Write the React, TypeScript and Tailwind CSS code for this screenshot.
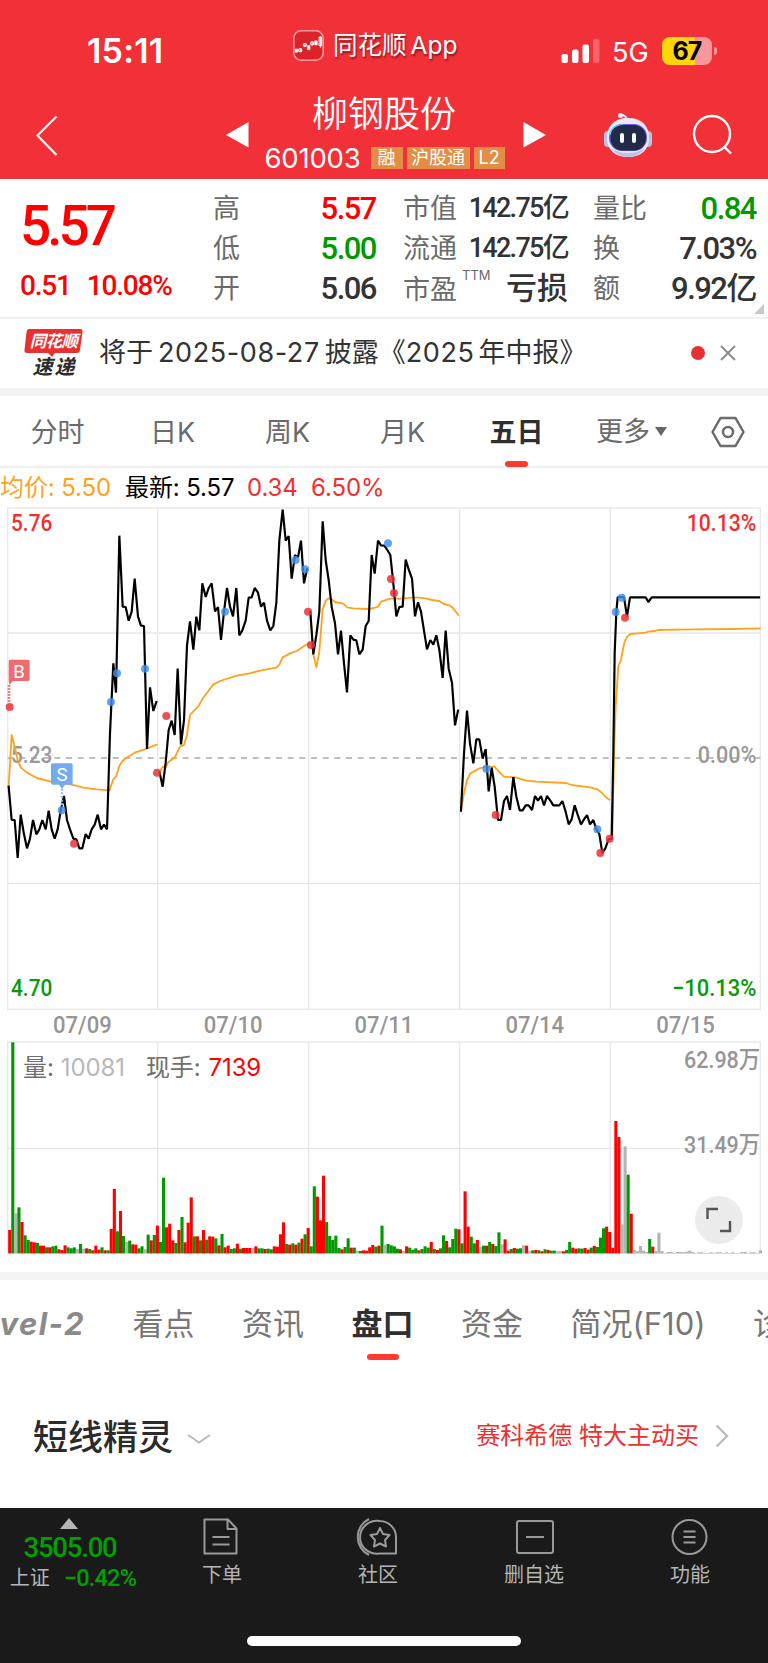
import { Fragment, type ReactNode } from "react";
import { clsx } from "clsx";

const DIN = "font-['Roboto','Noto_Sans_CJK_SC',sans-serif]";

const PRICE = [
  "26,860 35,960 44,960 53,1074 62,944 72,1003 81,1045 90,1016 99,960 109,1003 118,988 127,960 137,988 146,932 155,988 164,1016 173,988 182,932 192,888 201,960 210,988 220,1016 229,1018 238,1045 247,1045 257,1002 266,1016 275,988 284,974 293,944 303,988 312,974 321,988 330,700 340,490 348,578 358,107 368,320 377,321 386,362 395,335 404,236 414,350 423,377 432,378 441,747 450,562 460,633 469,606",
  "479,818 488,860 497,788 506,690 515,662 524,705 533,506 543,733 552,660 561,436 570,364 580,449 589,350 598,391 607,250 617,291 626,264 635,250 645,334 654,321 663,420 672,335 681,264 690,320 699,349 709,264 718,406 727,391 737,362 746,293 755,292 764,264 774,278 783,320 792,308 801,362 811,391 820,378 829,308 838,122 848,29 857,122 866,108 875,236 885,165 894,172 903,122 912,250 921,208",
  "931,335 940,463 949,405 958,335 968,64 977,180 986,240 995,320 1005,370 1014,463 1023,392 1032,490 1041,577 1051,406 1060,419 1069,421 1078,463 1088,449 1097,378 1106,363 1115,165 1124,221 1134,122 1143,136 1153,137 1162,150 1171,165 1180,250 1189,349 1198,321 1208,320 1217,179 1226,208 1236,236 1245,349 1254,307 1263,335 1272,392 1281,448 1291,420 1300,434 1309,406 1318,449 1328,534 1337,392 1346,506 1356,548 1365,676 1374,632",
  "1383,932 1392,760 1401,632 1410,730 1420,790 1429,718 1438,718 1448,776 1457,747 1466,874 1475,803 1484,860 1494,960 1503,960 1512,903 1521,888 1530,930 1540,831 1549,890 1559,931 1568,931 1577,916 1586,916 1596,930 1605,888 1614,902 1623,888 1632,916 1641,888 1651,902 1660,916 1678,916 1687,903 1697,935 1706,973 1715,958 1724,916 1733,944 1743,973 1752,958 1761,945 1770,973 1780,960 1789,988 1798,1002 1807,1059 1816,1045 1826,1017 1835,1017 1840,760 1844,460 1849,336 1853,292 1862,291 1872,292 1881,350 1890,292 1937,292 1945,306 1955,292 2277,292",
];

const AVERAGE = [
  "26,858 35,705 44,740 53,780 62,802 80,817 110,834 150,844 200,851 225,856 250,863 290,868 328,871 340,838 349,828 358,798 368,782 380,773 404,758 432,749 470,734",
  "479,815 488,800 497,802 506,785 524,773 540,740 552,735 561,704 570,645 597,616 607,597 640,553 660,543 710,527 745,521 780,512 829,503 838,494 848,472 870,460 890,453 925,430",
  "931,340 940,465 949,502 958,455 963,390 968,328 977,302 986,295 993,296 1005,306 1028,310 1042,322 1060,325 1105,327 1122,324 1134,320 1143,305 1170,296 1205,296 1235,293 1260,293 1280,296 1296,300 1318,303 1332,312 1348,316 1358,323 1375,345",
  "1383,930 1392,880 1401,840 1411,820 1438,805 1460,800 1483,800 1497,815 1512,830 1550,833 1578,842 1610,845 1698,849 1715,855 1770,862 1793,868 1805,878 1817,891 1828,899",
  "1837,1017 1842,760 1847,620 1855,498 1863,480 1870,442 1874,425 1882,410 1891,402 1938,398 1945,395 1965,393 1974,390 2080,388 2200,387 2280,385",
];

const SELLS = [[185, 931], [333, 606], [351, 520], [435, 506], [675, 335], [887, 180], [915, 208], [1164, 130], [1459, 806], [1792, 988], [1847, 336], [1865, 293]];
const BUYS = [[29, 621], [222, 1031], [471, 818], [499, 648], [924, 335], [933, 435], [1173, 237], [1182, 279], [1487, 945], [1801, 1059], [1829, 1016], [1875, 353]];

// r = up, g = down, n = flat
const VOLUME = [
  "r70 g633 n120 g138 r94 g54 g40 r35 r33 g31 r23 r23 g18 r18 g21 g23 r12 r10 r24 g18 g15 g18 n13 g28 n14 r15 g13 r9 r23 r11 g18 r9 g9 r73 r193 g66 r127 g52 n34 g38 r27 r26 g15 g21 n12 g56 r39 g55 r83",
  "g34 g227 r78 r89 r39 g31 r70 g109 r33 r92 r168 g51 r51 g39 r70 g41 r51 r50 g45 r24 g58 r18 r23 g13 g15 r29 g14 r16 r16 r16 n16 r21 g15 g15 r13 g14 g12 r21 r20 r57 r93 g28 r26 g30 r26 g32 r44 g57 r76",
  "g21 g201 r170 r99 r233 g94 g52 g40 g53 g16 r12 g19 g45 r17 g17 n8 g7 r9 r8 r18 r25 g20 r23 g83 n26 g28 g24 g21 g14 r12 n7 r21 g17 g11 g15 r9 g13 g21 g17 r34 g13 r10 g15 g54 r37 g18 g43 g74 r72",
  "g30 r186 r80 g50 g30 r40 n20 g23 r23 g34 r28 g22 g63 n27 r42 r8 g13 r16 g14 g15 n24 r23 n7 g9 r10 g9 r6 g12 r10 g8 g8 n6 n7 r6 g10 g34 r17 r14 g15 g14 r16 r11 g17 r22 g19 g47 g75 r80 r64",
  "r17 r397 r349 n87 n321 g236 r119 n10 n6 n22 n8 n4 g43 r20 n7 n62 n7 n1 n4 n4 n1 n4 n4 n3 n5 n8 n4 n1 n3 n3 n1 n1 n3 n1 n3 n3 n1 n3 n1 n3 n1 n1 n4 n4 n1 n3 n3 n1 n9",
];

const BAR_COLOR: Record<string, string> = { r: "#ff0000", g: "#009900", n: "#b4b4b4" };
const GRID_X = [23, 473, 926, 1379, 1831, 2281];

const TAGS = [
  { label: "融", width: "w-[32px]" },
  { label: "沪股通", width: "w-[63px]" },
  { label: "L2", width: "w-[31px]" },
];

function ChartText({ x, y, w, fill, children, anchor = "start", size = 70 }: {
  x: number; y: number; w: number; fill: string; children: string; anchor?: "start" | "middle" | "end"; size?: number;
}) {
  return (
    <text x={x} y={y} fill={fill} fontSize={size} fontWeight={500} textAnchor={anchor} textLength={w} lengthAdjust="spacingAndGlyphs">
      {children}
    </text>
  );
}

function PriceChart() {
  return (
    <svg viewBox="0 0 2304 1620" className={clsx("block h-[540px] w-[768px]", DIN)}>
      <g stroke="#e8e8e8" strokeWidth="4" fill="none">
        <rect x="23" y="24" width="2258" height="1504" />
        {GRID_X.slice(1, 5).map((x) => <path key={x} d={`M${x} 24V1528`} />)}
        <path d="M23 399H2281M23 1151H2281" />
      </g>
      <path d="M23 774H2281" stroke="#aaa" strokeWidth="5" strokeDasharray="18 17" />

      <ChartText x={33} y={92} w={124} fill="#ee3030">5.76</ChartText>
      <ChartText x={2269} y={92} w={209} anchor="end" fill="#ee3030">10.13%</ChartText>
      <ChartText x={33} y={789} w={124} fill="#999">5.23</ChartText>
      <ChartText x={2269} y={789} w={176} anchor="end" fill="#999">0.00%</ChartText>
      <ChartText x={33} y={1487} w={124} fill="#099a09">4.70</ChartText>
      <ChartText x={2269} y={1487} w={253} anchor="end" fill="#099a09">−10.13%</ChartText>
      {["07/09", "07/10", "07/11", "07/14", "07/15"].map((d, i) => (
        <ChartText key={d} x={247 + i * 452.4} y={1599} w={176} anchor="middle" fill="#959595">{d}</ChartText>
      ))}

      <g fill="none" strokeLinejoin="round" strokeLinecap="round">
        {AVERAGE.map((p) => <polyline key={p} points={p} stroke="#ffa31f" strokeWidth="5.500" />)}
        {PRICE.map((p) => <polyline key={p} points={p} stroke="#000" strokeWidth="6.500" strokeLinejoin="bevel" strokeLinecap="square" />)}
      </g>
      <g fill="#3f8ef0" fillOpacity=".82">
        {SELLS.map(([x, y]) => <circle key={x} cx={x} cy={y} r="12" />)}
      </g>
      <g fill="#ea3338" fillOpacity=".85">
        {BUYS.map(([x, y]) => <circle key={x} cx={x} cy={y} r="12" />)}
      </g>

      {/* trade flags */}
      <path d="M26 484q0-5 5-5h53q5 0 5 5v54q0 5-5 5H38l-9 12-3-12z" fill="#ef6b70" />
      <path d="M27 556V606" stroke="#ea3338" strokeOpacity=".8" strokeWidth="8" strokeDasharray="4 5" />
      <text x="57" y="533" textAnchor="middle" fontSize="56" fill="#fff">B</text>
      <path d="M153 795q0-5 5-5h55q5 0 5 5v54q0 5-5 5h-18l-9 12-9-12h-19q-5 0-5-5z" fill="#74aaf0" />
      <path d="M186 866V920" stroke="#8cbcf5" strokeWidth="7" strokeDasharray="6 5" />
      <text x="186" y="843" textAnchor="middle" fontSize="56" fill="#fff">S</text>
    </svg>
  );
}

function VolumeChart() {
  return (
    <div className="relative h-[214px]">
      <svg viewBox="0 180 2304 642" className={clsx("block h-[214px] w-[768px]", DIN)}>
        <g stroke="#e8e8e8" strokeWidth="4" fill="none">
          <rect x="23" y="186" width="2258" height="635" />
          {GRID_X.slice(1, 5).map((x) => <path key={x} d={`M${x} 186V821`} />)}
          <path d="M23 505H2281" />
        </g>
        {VOLUME.map((day, d) => (
          <Fragment key={d}>
            {day.split(" ").map((bar, i) => {
              const h = Number(bar.slice(1));
              return <rect key={i} x={24.5 + d * 452.3 + i * 9.23} y={820 - h} width="9.3" height={h} fill={BAR_COLOR[bar[0]]} />;
            })}
          </Fragment>
        ))}
        <ChartText x={2281} y={263} w={229} anchor="end" fill="#959595">62.98万</ChartText>
        <ChartText x={2281} y={518} w={229} anchor="end" fill="#959595">31.49万</ChartText>
      </svg>
      <div className="absolute top-[15px] left-[23px] flex h-[26px] items-center text-[24px] leading-none tracking-[-0.1px] whitespace-nowrap text-[#6e6e6e]">
        <span>量:</span>
        <span className="ml-[7px] text-[#b8b8b8]">10081</span>
        <span className="ml-[21px]">现手:</span>
        <span className="ml-[8px] text-[#ff0000]">7139</span>
      </div>
      <div className="absolute top-[156px] left-[695px] h-[48px] w-[48px] rounded-full bg-[#ececec]">
        <svg viewBox="0 0 48 48" className="h-full w-full" fill="none" stroke="#555" strokeWidth="2.4">
          <path d="M12.500 23V13H23M25 35H35V25" />
        </svg>
      </div>
    </div>
  );
}

function Robot() {
  return (
    <svg viewBox="0 0 50 48" className="h-[48px] w-[50px]">
      <path d="M24 9Q23 4 18 4" stroke="#e4e8f6" strokeWidth="2" fill="none" />
      <circle cx="17.500" cy="4.500" r="2.500" fill="#e4e8f6" />
      <rect x="1" y="20" width="8" height="16" rx="4" fill="#b9c1e4" />
      <rect x="41" y="20" width="8" height="16" rx="4" fill="#b9c1e4" />
      <path d="M25 7C39 7 46 15 46 27S38 46 25 46 4 39 4 27 11 7 25 7z" fill="#e9ecf8" />
      <path d="M8 37Q14 46 25 46T42 37Q35 42 25 42T8 37z" fill="#bcc4e6" />
      <rect x="6" y="13" width="38" height="27" rx="13" fill="#7257e8" />
      <path d="M7 24Q8 14 20 14" stroke="#53d4ef" strokeWidth="1.500" fill="none" />
      <rect x="7.500" y="14" width="35.500" height="25.500" rx="12" fill="#202a49" />
      <rect x="17" y="22" width="4" height="10" rx="2" fill="#fff" />
      <rect x="29" y="22" width="4" height="10" rx="2" fill="#fff" />
    </svg>
  );
}

function Header() {
  return (
    <header className="h-[179px] bg-[#f23038] text-white">
      <div className="flex h-[94px] pl-[87px]">
        <div className="mt-[34px] w-[206px] text-[34px] leading-[34px] font-semibold tracking-[0.2px]">15:11</div>
        <div className="mt-[29px] flex h-[32px] w-[268px] items-center">
          <svg viewBox="0 0 30 30" className="h-[31px] w-[31px]" fill="none" stroke="#fff">
            <rect x=".8" y=".8" width="28.400" height="28.400" rx="7" fill="#dc2329" stroke="#f79da0" strokeWidth="1.500" />
            <path d="M2 18.500h2.500v3H2zM14 15h2.500v4H14zM21 10.500h2.500v4H21z" fill="#fff" strokeWidth=".5" />
            <path d="M7 18v3M11.500 13v3M18.500 11v4M26.500 6v11" strokeWidth="1" />
            <circle cx="7" cy="19.500" r="1.600" />
            <circle cx="11.500" cy="14.500" r="1.500" />
            <circle cx="18.500" cy="13" r="1.500" />
            <rect x="25.300" y="7" width="2.400" height="8" />
          </svg>
          <span className="ml-[9px] text-[24.500px] leading-none whitespace-nowrap [text-shadow:1px_2px_2px_rgb(0_0_0/0.45)]">同花顺<span className="ml-[4px]">App</span></span>
        </div>
        <svg viewBox="0 0 40 26" className="mt-[38px] h-[26px] w-[40px]" fill="#fff">
          <rect x="0.500" y="16" width="6.500" height="9" rx="2" />
          <rect x="11" y="11.500" width="6.500" height="13.500" rx="2" />
          <rect x="21.500" y="6.500" width="6.500" height="18.500" rx="2" />
          <rect x="32" y="1" width="6.500" height="24" rx="2" opacity=".25" />
        </svg>
        <span className="mt-[39px] ml-[11px] w-[50px] text-[27px] leading-[28px]">5G</span>
        <div className="mt-[37px] flex h-[28px] w-[50px] items-center justify-center rounded-[8px] bg-[linear-gradient(90deg,#ffd60a_66%,#f8989c_66%)] text-[25px] leading-none font-bold tracking-[-1px] text-black">67</div>
        <div className="mt-[47px] ml-[1.500px] h-[8px] w-[3px] rounded-r-full bg-[#f8989c]" />
      </div>
      <div className="flex h-[85px] pl-[35px]">
        <svg viewBox="0 0 24 42" className="mt-[21px] mr-[166px] h-[42px] w-[24px]" fill="none" stroke="#fff" strokeWidth="2.200"><path d="M21.500 1.500L2.500 20.500L21.500 40" /></svg>
        <svg viewBox="0 0 24 26" className="mt-[28px] h-[26px] w-[24px] fill-white"><path d="M1 13L23.500 0V25.500z" /></svg>
        <div className="mx-[7px] w-[260px] pr-[3px]">
          <div className="h-[44px] pr-[1px] text-center text-[36px] leading-[41px] font-[350]">柳钢股份</div>
          <div className="flex h-[40px] items-start justify-center gap-[4px]">
            <span className="mt-[7px] mr-[6px] text-[27.500px] leading-[26px] tracking-[-0.2px]">601003</span>
            {TAGS.map(({ label, width }) => (
              <span key={label} className={clsx("mt-[9px] flex h-[22px] items-center justify-center bg-[#e38e46] text-[18px] leading-none", width)}>{label}</span>
            ))}
          </div>
        </div>
        <svg viewBox="0 0 24 26" className="mt-[28px] h-[26px] w-[24px] fill-white"><path d="M.5 0V25.500L23 13z" /></svg>
        <div className="mt-[17px] ml-[56px]"><Robot /></div>
        <svg viewBox="0 0 42 42" className="mt-[20px] ml-[39px] h-[42px] w-[42px]" fill="none" stroke="#fff" strokeWidth="2.400">
          <circle cx="20" cy="20" r="18" />
          <path d="M31.500 32L39 39.500" />
        </svg>
      </div>
    </header>
  );
}

function Stat({ label, sup, children }: { label: string; sup?: string; children: ReactNode }) {
  return (
    <div className="flex h-[40px] items-center justify-between leading-none whitespace-nowrap">
      <span className={clsx("flex text-[27px] text-[#6b6b6b]", sup && "pt-[3px]")}>
        {label}
        {sup && <sup className="-mt-[1px] ml-[5px] text-[13px] leading-none">{sup}</sup>}
      </span>
      {children}
    </div>
  );
}

function Quote() {
  const big = clsx(DIN, "text-[31px] font-medium tracking-[-1.5px]");
  const mid = clsx(DIN, "text-[27px] font-medium tracking-[-1.7px] text-[#333]");
  return (
    <section className="relative flex h-[140px] border-b-2 border-[#f0f0f0] pt-[9px]">
      <div className={clsx("w-[213px] pl-[20px] font-medium text-[#ff0000]", DIN)}>
        <div className="h-[79px] pt-[12px] text-[55px] leading-[52px] tracking-[-4px]">5.57</div>
        <div className="flex gap-[16px] text-[28px] leading-[37px] tracking-[-1.2px]">
          <span>0.51</span>
          <span>10.08%</span>
        </div>
      </div>
      <div className="w-[163px]">
        <Stat label="高"><span className={clsx(big, "text-[#ff0000]")}>5.57</span></Stat>
        <Stat label="低"><span className={clsx(big, "text-[#009900]")}>5.00</span></Stat>
        <Stat label="开"><span className={clsx(big, "text-[#333]")}>5.06</span></Stat>
      </div>
      <div className="ml-[27px] w-[165px]">
        <Stat label="市值"><span className={mid}>142.75亿</span></Stat>
        <Stat label="流通"><span className={mid}>142.75亿</span></Stat>
        <Stat label="市盈" sup="TTM"><span className="pb-[2px] text-[31px] font-medium text-[#333]">亏损</span></Stat>
      </div>
      <div className="ml-[25px] w-[163px]">
        <Stat label="量比"><span className={clsx(big, "text-[#009900]")}>0.84</span></Stat>
        <Stat label="换"><span className={clsx(big, "text-[#333]")}>7.03%</span></Stat>
        <Stat label="额"><span className={clsx(big, "text-[#333]")}>9.92亿</span></Stat>
      </div>
      <svg viewBox="0 0 10 10" className="absolute right-[4px] bottom-[3px] h-[10px] w-[10px] fill-[#c8c8c8]"><path d="M10 0V10H0z" /></svg>
    </section>
  );
}

function News() {
  return (
    <section className="flex h-[69px] items-center pb-[2px] pl-[24px]">
      <div className="relative h-[50px] w-[59px] font-bold italic">
        <svg viewBox="0 0 59 29" className="absolute inset-0 h-[29px] w-[59px] fill-[#e93030]"><path d="M5 1H56q3 0 2.500 3L56 22q-.5 3-3 3H31l-3 4-4-4H3q-3 0-2.500-3L2.500 4q.5-3 2.500-3z" /></svg>
        <div className="relative h-[28px] text-center text-[16.500px] leading-[26px] tracking-[-0.700px] text-white">同花顺</div>
        <div className="flex h-[22px] justify-center gap-[2px] text-[20px] leading-[22px] text-[#2b2b2b]"><span>速</span><span>递</span></div>
      </div>
      <div className="ml-[16px] w-[592px] text-[27px] leading-none whitespace-nowrap text-[#333]">
        将于<span className="mr-[5px] ml-[5px] tracking-[0.6px]">2025-08-27</span>披露《<span className="mr-[4px] tracking-[0.6px]">2025</span>年中报》
      </div>
      <div className="h-[14px] w-[14px] rounded-full bg-[#e93030]" />
      <svg viewBox="0 0 16 16" className="ml-[15px] h-[16px] w-[16px]" stroke="#8c8c8c" strokeWidth="2"><path d="M1 1L15 15M15 1L1 15" /></svg>
    </section>
  );
}

function PeriodTabs() {
  return (
    <nav className="flex h-[72px] border-b-2 border-[#f0f0f0] text-[27px] leading-[73px] text-[#6b6b6b]">
      {["分时", "日K", "周K", "月K"].map((t) => <div key={t} className="w-[115px] text-center">{t}</div>)}
      <div className="relative w-[113px] text-center font-bold text-[#2f2f2f]">
        五日
        <i className="absolute bottom-[-1px] left-[45px] h-[6px] w-[23px] rounded-full bg-[#ff3b30]" />
      </div>
      <div className="flex w-[117px] items-center justify-center gap-[5px]">
        更多
        <svg viewBox="0 0 12 9" className="h-[9px] w-[12px] fill-[#666]"><path d="M0 0H12L6 9z" /></svg>
      </div>
      <div className="flex w-[76px] items-center justify-center pt-[1px]">
        <svg viewBox="0 0 34 32" className="h-[32px] w-[34px]" fill="none" stroke="#6b6b6b" strokeWidth="2.500" strokeLinejoin="round">
          <path d="M9.500 2H24.500L32.500 16L24.500 30H9.500L1.500 16z" />
          <circle cx="17" cy="16" r="5" />
        </svg>
      </div>
    </nav>
  );
}

function InfoTabs() {
  return (
    <nav className="flex h-[92px] gap-[47.500px] overflow-hidden text-[31px] leading-[88px] whitespace-nowrap text-[#777]">
      <div className="flex w-[85px] shrink-0 justify-end font-bold italic tracking-[1.5px] text-[#8a8a8a]"><span>Level-2</span></div>
      <div>看点</div>
      <div>资讯</div>
      <div className="relative font-bold text-[#2f2f2f]">
        盘口
        <i className="absolute top-[74px] left-[15px] h-[6px] w-[32px] rounded-full bg-[#ff3b30]" />
      </div>
      <div>资金</div>
      <div>简况(F10)</div>
      <div>诊股</div>
    </nav>
  );
}

function NavItem({ label, children }: { label: string; children: ReactNode }) {
  return (
    <div className="flex w-[156px] flex-col items-center pt-[8px] text-[20px] leading-[24px] text-[#b5b5b5]">
      <svg viewBox="0 0 44 40" className="h-[40px] w-[44px]" fill="none" stroke="#999" strokeWidth="2" strokeLinejoin="round">{children}</svg>
      <span className="mt-[7px]">{label}</span>
    </div>
  );
}

function BottomBar() {
  return (
    <footer className="flex h-[155px] flex-col bg-[#1a1a1a]">
      <div className="flex h-[128px]">
        <div className="flex w-[144px] flex-col items-center pt-[10px]">
          <svg viewBox="0 0 18 11" className="mr-[6px] h-[11px] w-[18px] fill-[#b5b5b5]"><path d="M9 0L18 11H0z" /></svg>
          <div className={clsx("mt-[3px] mr-[4px] text-[27.500px] leading-[32px] font-medium tracking-[-1.2px] text-[#00a000]", DIN)}>3505.00</div>
          <div className="flex items-center gap-[14px] pl-[2px] text-[20px] leading-[28px] text-[#b5b5b5]">
            上证<span className={clsx("text-[23.500px] font-medium tracking-[-0.800px] text-[#00a000]", DIN)}>−0.42%</span>
          </div>
        </div>
        <NavItem label="下单">
          <path d="M6 3.500H29.500L38 12.500V37.500H6zM29 4V13H38" transform="translate(-1.5 0)" />
          <path d="M12.500 21H29.500M12.500 28.500H29.500" />
        </NavItem>
        <NavItem label="社区">
          <path d="M24 5A17 16.500 0 1 0 24 37.500H40V21A16.500 16 0 0 0 24 5zM13 3A20 20 0 0 0 13 39" />
          <path d="M24 12L27 18L33.500 19L29 24L30 30.500L24 27.500L18 30.500L19 24L14.500 19L21 18z" />
        </NavItem>
        <NavItem label="删自选">
          <rect x="5" y="5" width="36" height="32" rx="2" />
          <path d="M14 21H32" />
        </NavItem>
        <NavItem label="功能">
          <circle cx="21.500" cy="21" r="17" />
          <path d="M15.500 15.500H27.500M15.500 21H27.500M15.500 26.500H27.500" />
        </NavItem>
      </div>
      <div className="mx-auto h-[10px] w-[274px] rounded-full bg-white" />
    </footer>
  );
}

export default function App() {
  return (
    <div className="h-[1663px] w-[768px] overflow-hidden bg-white font-['Inter','Noto_Sans_CJK_SC',sans-serif]">
      <Header />
      <Quote />
      <News />
      <div className="h-[8px] bg-[#f4f4f4]" />
      <PeriodTabs />
      <div className="flex h-[32px] items-center pt-[8px] text-[24px] leading-none tracking-[-0.1px] whitespace-nowrap">
        <span className="w-[125px] text-[#ffa31f]">均价: 5.50</span>
        <span className="w-[122px]">最新: 5.57</span>
        <span className="w-[64px] text-[#ee3030]">0.34</span>
        <span className="text-[#ee3030]">6.50%</span>
      </div>
      <PriceChart />
      <VolumeChart />
      <div className="mt-[18px] h-[8px] bg-[#f4f4f4]" />
      <InfoTabs />
      <section className="flex h-[136px] items-center pr-[39px] pb-[6px] pl-[33px]">
        <h2 className="text-[35px] leading-none font-medium text-[#2b2b2b]">短线精灵</h2>
        <svg viewBox="0 0 24 12" className="mt-[4px] ml-[14px] h-[12px] w-[24px]" fill="none" stroke="#bbb" strokeWidth="2"><path d="M1 2L12 9.500L23 2" /></svg>
        <span className="ml-auto pb-[2px] text-[24px] leading-none text-[#ee3030]">赛科希德 特大主动买</span>
        <svg viewBox="0 0 14 24" className="mb-[3px] ml-[16px] h-[24px] w-[14px]" fill="none" stroke="#bbb" strokeWidth="2.400"><path d="M1.500 1.500L12 12L1.500 22.500" /></svg>
      </section>
      <BottomBar />
    </div>
  );
}
